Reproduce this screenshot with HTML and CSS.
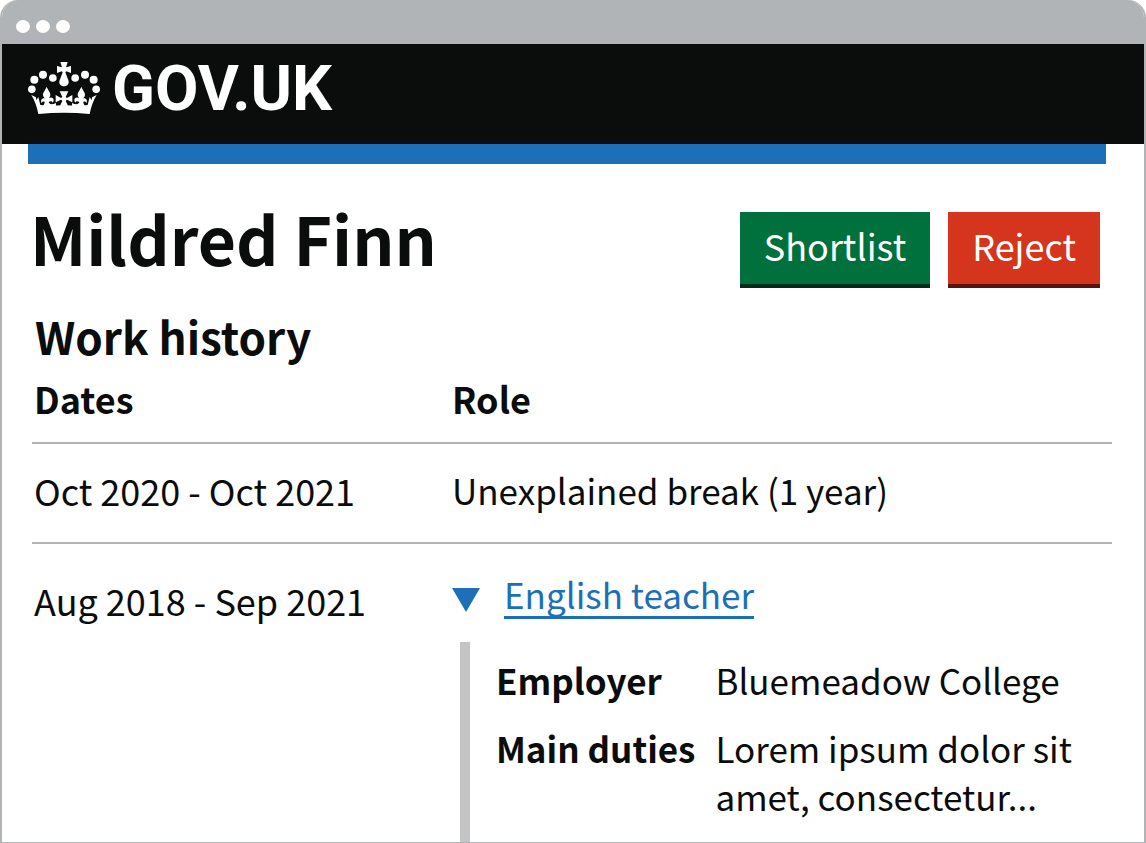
FILE: index.html
```html
<!DOCTYPE html>
<html lang="en">
<head>
<meta charset="utf-8">
<meta name="viewport" content="width=device-width, initial-scale=1">
<title>Mildred Finn - GOV.UK</title>
<link rel="stylesheet" href="styles.css">
</head>
<body>
<div class="window">
  <div class="titlebar"><span class="dot"></span><span class="dot"></span><span class="dot"></span></div>
  <header class="header">
    <svg class="crown" viewBox="24 24 216 156" aria-hidden="true">
      <g fill="#fff">
        <circle cx="35.500" cy="106" r="11.500"/><circle cx="43" cy="77" r="12"/><circle cx="69" cy="62" r="12"/><circle cx="98.500" cy="72" r="11.500"/>
        <circle cx="165.500" cy="72" r="11.500"/><circle cx="195" cy="62" r="12"/><circle cx="221" cy="77" r="12"/><circle cx="228.500" cy="106" r="11.500"/>
        <path d="M121 24h22l-5 16 15-4v21l-14-5-3 3 9 24c4 10-3 18-13 18s-17-8-13-18l9-24-3-3-14 5V36l15 4z"/>
        <path d="M34 123l14 7 1 9 6-10 6 24c22 5 46 1 71 1s49 4 71-1l6-24 6 10 1-9 14-7c-11 18-17 37-21 57-51-5-103-5-154 0-4-20-10-39-21-57z"/>
        <path d="M119 112h26l-8 17 4 3 16-9v22l-16-8-4 3 8 18h-26l8-18-4-3-16 8v-22l16 9 4-3z"/>
        <g id="fleur">
          <path d="M80 98c5 12 11 17 11 24 0 5-3 8-6 11 7-5 17-2 16 6 0 3-1 5-3 7-2-5-7-5-12-2 2 7 9 9 22 3v14H64v-6c5 2 9-2 10-11-4-3-8-1-9 3-5-8 1-16 10-14-3-3-6-6-6-11 0-7 6-12 11-24z"/>
        </g>
        <use href="#fleur" transform="matrix(-1 0 0 1 264 0)"/>
      </g>
    </svg>
    <a class="brand" href="#">GOV.UK</a>
  </header>
  <main class="main">
    <div class="heading">
      <h1 class="name">Mildred Finn</h1>
      <div class="actions">
        <button class="button" type="button">Shortlist</button>
        <button class="button button-warning" type="button">Reject</button>
      </div>
    </div>
    <h2 class="section-title">Work history</h2>
    <table class="history">
      <thead><tr><th class="dates" scope="col">Dates</th><th scope="col">Role</th></tr></thead>
      <tbody>
        <tr class="break"><td>Oct 2020 - Oct 2021</td><td class="role">Unexplained break (1 year)</td></tr>
        <tr class="job">
          <td>Aug 2018 - Sep 2021</td>
          <td class="role job-role">
            <details open>
              <summary class="summary"><svg class="arrow" viewBox="0 0 28 24" aria-hidden="true"><path d="M0 0h28L14 24z" fill="#1d70b8"/></svg><span class="summary-text">English teacher</span></summary>
              <dl class="facts">
                <dt>Employer</dt><dd>Bluemeadow College</dd>
                <dt>Main duties</dt><dd>Lorem ipsum dolor sit amet, consectetur...</dd>
              </dl>
            </details>
          </td>
        </tr>
      </tbody>
    </table>
  </main>
</div>
</body>
</html>
```
FILE: styles.css
```css
* { box-sizing: border-box; }
body {
  margin: 0;
  background: #fff;
  color: #0b0c0c;
  font-family: "Noto Sans CJK SC", "Noto Sans", sans-serif;
  font-size: 36px;
  line-height: 48px;
}
.window {
  display: flex;
  flex-direction: column;
  min-height: 100vh;
  border: 2px solid #b1b4b6;
  border-top: 0;
  border-bottom-width: 1px;
  border-radius: 18px 18px 0 0;
  overflow: hidden;
}
.titlebar {
  display: flex;
  align-items: center;
  gap: 6px;
  height: 44px;
  padding: 9px 14px 0;
  background: #b1b4b6;
}
.dot { width: 14px; height: 13px; border-radius: 50%; background: #fff; }
.header {
  display: flex;
  align-items: center;
  gap: 12px;
  height: 100px;
  padding: 0 26px 12px;
  background: #0b0c0c;
}
.crown { width: 72px; height: 52px; }
.brand {
  padding-top: 2px;
  color: #fff;
  font-family: Roboto, sans-serif;
  font-size: 63px;
  font-weight: 700;
  text-decoration: none;
}
.main { flex: 1; display: flex; flex-direction: column; margin: 0 32px 0 26px; }
.main::before { content: ""; height: 20px; margin-right: 6px; background: #1d70b8; }
.heading {
  display: flex;
  align-items: flex-start;
  justify-content: space-between;
  padding: 48px 12px 0 2px;
}
.name { margin: 0; font-size: 66px; line-height: 50px; font-weight: 700; }
.actions { display: flex; gap: 18px; }
.button {
  padding: 9px 24px 19px;
  border: 0;
  border-radius: 0;
  background: #00703c;
  box-shadow: inset 0 -4px #002d18;
  color: #fff;
  font: inherit;
}
.button-warning { background: #d4351c; box-shadow: inset 0 -4px #55150b; }
.section-title { margin: 24px 0 0 7px; font-size: 44px; line-height: 48px; font-weight: 700; }
.history { margin: 14px 0 0 4px; border-collapse: collapse; table-layout: fixed; }
.history th, .history td { padding: 0 2px; text-align: left; vertical-align: top; font-weight: 400; }
.history th { padding-bottom: 20px; border-bottom: 2px solid #b1b4b6; font-weight: 700; }
.history .dates { width: 418px; }
.history .break td { padding-top: 22px; padding-bottom: 28px; border-bottom: 2px solid #b1b4b6; }
.history .role { font-size: 35px; }
.history .job td { padding-top: 32px; }
.history .job .job-role { padding: 26px 0 0 2px; }
.summary { display: flex; align-items: center; gap: 24px; list-style: none; color: #1d70b8; }
.summary::-webkit-details-marker { display: none; }
.arrow { width: 28px; height: 24px; margin-top: 12px; }
.summary-text {
  text-decoration: underline;
  text-decoration-thickness: 3px;
  text-decoration-skip-ink: none;
  text-underline-offset: 7px;
}
.facts {
  display: grid;
  grid-template-columns: auto 1fr;
  gap: 20px;
  margin: 24px 0 0 8px;
  padding: 14px 12px 22px 26px;
  border-left: 10px solid #c4c4c4;
}
.facts dt { font-weight: 700; white-space: nowrap; }
.facts dd { margin: 0; }
```
